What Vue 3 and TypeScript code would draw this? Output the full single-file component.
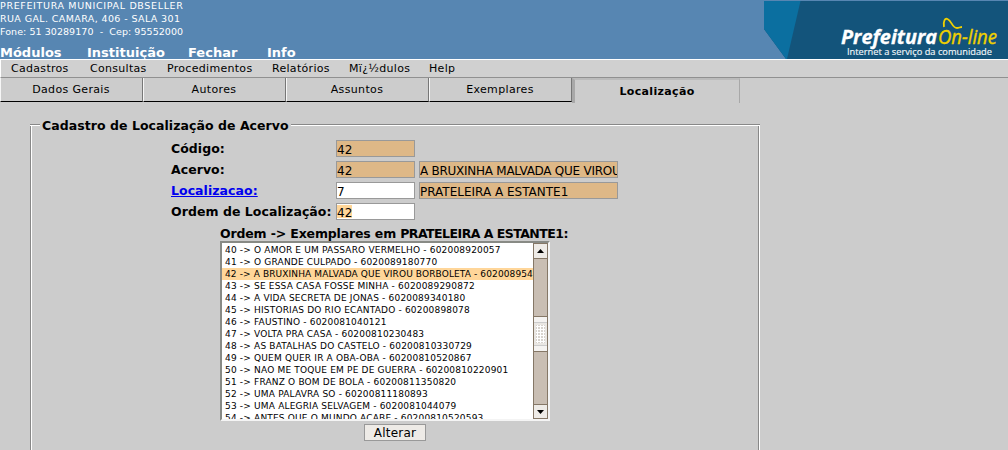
<script setup lang="ts">
interface Item { label: string; width: number }
interface Copy { order: number; title: string; code: string }

const modules: Item[] = [
  { label: 'Módulos', width: 87 },
  { label: 'Instituição', width: 101 },
  { label: 'Fechar', width: 79 },
  { label: 'Info', width: 60 },
]
const menus: Item[] = [
  { label: 'Cadastros', width: 79 },
  { label: 'Consultas', width: 77 },
  { label: 'Procedimentos', width: 105 },
  { label: 'Relatórios', width: 77 },
  { label: 'Mï¿½dulos', width: 80 },
  { label: 'Help', width: 60 },
]
const tabs: string[] = ['Dados Gerais', 'Autores', 'Assuntos', 'Exemplares']
const copies: Copy[] = [
  { order: 40, title: 'O AMOR E UM PASSARO VERMELHO', code: '602008920057' },
  { order: 41, title: 'O GRANDE CULPADO', code: '6020089180770' },
  { order: 42, title: 'A BRUXINHA MALVADA QUE VIROU BORBOLETA', code: '602008954' },
  { order: 43, title: 'SE ESSA CASA FOSSE MINHA', code: '6020089290872' },
  { order: 44, title: 'A VIDA SECRETA DE JONAS', code: '6020089340180' },
  { order: 45, title: 'HISTORIAS DO RIO ECANTADO', code: '60200898078' },
  { order: 46, title: 'FAUSTINO', code: '6020081040121' },
  { order: 47, title: 'VOLTA PRA CASA', code: '60200810230483' },
  { order: 48, title: 'AS BATALHAS DO CASTELO', code: '60200810330729' },
  { order: 49, title: 'QUEM QUER IR A OBA-OBA', code: '60200810520867' },
  { order: 50, title: 'NAO ME TOQUE EM PE DE GUERRA', code: '60200810220901' },
  { order: 51, title: 'FRANZ O BOM DE BOLA', code: '60200811350820' },
  { order: 52, title: 'UMA PALAVRA SO', code: '60200811180893' },
  { order: 53, title: 'UMA ALEGRIA SELVAGEM', code: '6020081044079' },
  { order: 54, title: 'ANTES QUE O MUNDO ACABE', code: '60200810520593' },
]
const selected = 42
</script>

<template>
  <div class="page">
    <header class="top">
      <div class="org">
        <div class="l1">PREFEITURA MUNICIPAL DBSELLER</div>
        <div class="l2">RUA GAL. CAMARA, 406 - SALA 301</div>
        <div class="l3">Fone: 51 30289170 &nbsp;-&nbsp; Cep: 95552000</div>
        <nav class="modules">
          <span v-for="m in modules" :key="m.label" :style="{ width: m.width + 'px' }">{{ m.label }}</span>
        </nav>
      </div>
      <svg class="banner" width="244" height="59" viewBox="0 0 244 59">
        <path d="M0 1H244V59H22L0 29Z" fill="#13547b" />
        <path d="M0 1H36.500L23 59H22L0 29Z" fill="#0b6fa0" />
        <g font-family="'Open Sans', 'Noto Sans', sans-serif">
          <text x="77" y="44" font-size="19.500" font-weight="700" font-style="italic" fill="#fff" stroke="#fff" stroke-width=".3" textLength="96" lengthAdjust="spacingAndGlyphs">Prefeitura</text>
          <text x="174" y="44" font-size="20.500" font-style="italic" fill="#f0d000" stroke="#f0d000" stroke-width=".4" textLength="59" lengthAdjust="spacingAndGlyphs">On-line</text>
          <text x="83" y="55" font-size="9.500" fill="#f2f7fa" stroke="#f2f7fa" stroke-width=".15" textLength="145" lengthAdjust="spacingAndGlyphs">Internet a serviço da comunidade</text>
        </g>
        <path d="M180 27C179 21 181 18 183.500 19C188 21 188 28 193 28C195 28 196 27 198 27" fill="none" stroke="#f0d000" stroke-width="1.800" />
      </svg>
    </header>

    <nav class="menubar">
      <span v-for="m in menus" :key="m.label" :style="{ width: m.width + 'px' }">{{ m.label }}</span>
    </nav>

    <div class="tabs">
      <div v-for="t in tabs" :key="t" class="tab">{{ t }}</div>
      <div class="tab active">Localização</div>
    </div>

    <section class="group">
      <div class="caption"><i class="before"></i><b>Cadastro de Localização de Acervo</b><i class="after"></i></div>
      <div class="content">
        <div class="row"><label>Código:</label><div class="field tan">42</div></div>
        <div class="row"><label>Acervo:</label><div class="field tan">42</div><div class="field tan wide title">A BRUXINHA MALVADA QUE VIROU</div></div>
        <div class="row"><label><a>Localizacao:</a></label><div class="field">7</div><div class="field tan wide">PRATELEIRA A ESTANTE1</div></div>
        <div class="row"><label>Ordem de Localização:</label><div class="field"><mark>42</mark></div></div>
        <div class="list-title">Ordem -&gt; Exemplares em <span>PRATELEIRA A ESTANTE1:</span></div>
        <div class="list">
          <div class="options">
            <div v-for="c in copies" :key="c.order" class="option" :class="{ on: c.order === selected }">{{ c.order }} -&gt; {{ c.title }} - {{ c.code }}</div>
          </div>
          <div class="scroll">
            <div class="arrow"><svg width="7" height="4"><path d="M3.500 0L7 4H0Z" /></svg></div>
            <div class="track upper"></div>
            <div class="thumb"><div class="grip"></div></div>
            <div class="track"></div>
            <div class="arrow"><svg width="7" height="4"><path d="M0 0H7L3.500 4Z" /></svg></div>
          </div>
        </div>
        <div class="button">Alterar</div>
      </div>
    </section>
  </div>
</template>

<style>
body { background: #ccc; overflow: hidden; }
</style>

<style scoped>
.page { width: 1008px; height: 450px; overflow: hidden; background: #ccc; color: #000; font-family: "DejaVu Sans", sans-serif; white-space: nowrap; box-sizing: border-box; }
.page * { box-sizing: border-box; }
.top { height: 59px; background: #5786b2; color: #fff; display: flex; justify-content: space-between; }
.org { font-size: 9.500px; line-height: 13px; }
.l1 { height: 12px; line-height: 12px; letter-spacing: .66px; }
.l2 { letter-spacing: .39px; }
.l3 { letter-spacing: .06px; }
.modules { display: flex; margin-top: 7px; height: 16px; line-height: 16px; font-size: 13px; font-weight: bold; }
.banner { display: block; }
.menubar { height: 19px; border-top: 1px solid #fff; border-bottom: 1px solid #909090; border-left: 1px solid #fff; background: #d0d0d0; display: flex; padding-left: 10px; font-size: 11px; line-height: 18px; letter-spacing: .3px; }
.tabs { display: flex; height: 25px; font-size: 11px; letter-spacing: .35px; }
.tab { width: 143px; height: 24px; border-left: 1px solid #f6f6f6; border-right: 1px solid #777; border-bottom: 1px solid #000; text-align: center; line-height: 23px; padding-right: 1px; }
.active { width: 168px; height: 25px; border-left: 3px solid #a8a8a8; border-right: 1px solid #a8a8a8; border-top: 2px solid #bbb; border-bottom: 0; font-weight: bold; letter-spacing: .35px; padding-right: 0; }
.group { width: 730px; height: 360px; margin: 15px 0 0 30px; }
.caption { height: 16px; display: flex; align-items: center; font-size: 12.500px; letter-spacing: .05px; line-height: 16px; }
.caption i { height: 2px; background: #fff; border-top: 1px solid #888; margin-top: -2px; }
.before { width: 10px; }
.caption b { padding: 0 2px 0 2px; }
.after { flex: 1; }
.content { height: 340px; margin-top: -9px; padding-top: 15px; padding-left: 1px; border-left: 1px solid #888; border-right: 1px solid #fff; box-shadow: inset 1px 0 #fff, inset -1px 0 #888; }
.row { height: 21px; display: flex; padding-left: 139px; gap: 4px; }
.row label { width: 161px; font-size: 12.500px; letter-spacing: .05px; font-weight: bold; line-height: 18px; }
.row a { color: #00e; text-decoration: underline; }
.field { width: 79px; height: 17px; border: 1px solid #999; background: #fff; font-size: 12px; line-height: 18px; overflow: hidden; }
.tan { background: #deb887; }
.wide { width: 199px; }
.title { letter-spacing: -.26px; }
.field mark { background: #ffd699; color: #000; display: inline-block; height: 13px; line-height: 16px; }
.list-title { padding-left: 188px; height: 17px; line-height: 19px; font-size: 12.500px; font-weight: bold; letter-spacing: -.15px; }
.list-title span { letter-spacing: -.53px; }
.list { width: 330px; height: 180px; margin-left: 188px; background: #fff; border: 2px solid; border-color: #888a85 #f4f4f4 #f4f4f4 #888a85; display: flex; }
.options { width: 311px; height: 176px; padding-top: 1px; overflow: hidden; font-size: 9px; }
.option { height: 12px; line-height: 12px; padding-left: 3px; letter-spacing: .18px; }
.on { background: #ffd699; letter-spacing: .12px; }
.scroll { width: 15px; height: 176px; display: flex; flex-direction: column; border: 1px solid #857766; background: #c9beb3; }
.arrow { height: 14px; background: #eeebe7; display: flex; align-items: center; justify-content: center; }
.track { flex: 1; }
.track.upper { flex: 0 0 58px; border-top: 1px solid #857766; }
.thumb { height: 36px; border: 1px solid #857766; border-left: 0; border-right: 0; background: #f5f3f1; padding: 5px 0; }
.grip { height: 24px; padding: 2px; border-top: 1px solid #ccc; border-bottom: 1px solid #ccc; background: radial-gradient(circle, #fff 1px, #d0cbc4 1.500px) 0 0 / 3px 3px content-box, #eae7e3; }
.arrow:last-child { border-top: 1px solid #857766; }
.button { width: 62px; height: 17px; margin: 3px 0 0 332px; border: 1px solid #999; background: #eeebe7; text-align: center; font-size: 12px; line-height: 17px; letter-spacing: .2px; }
</style>
